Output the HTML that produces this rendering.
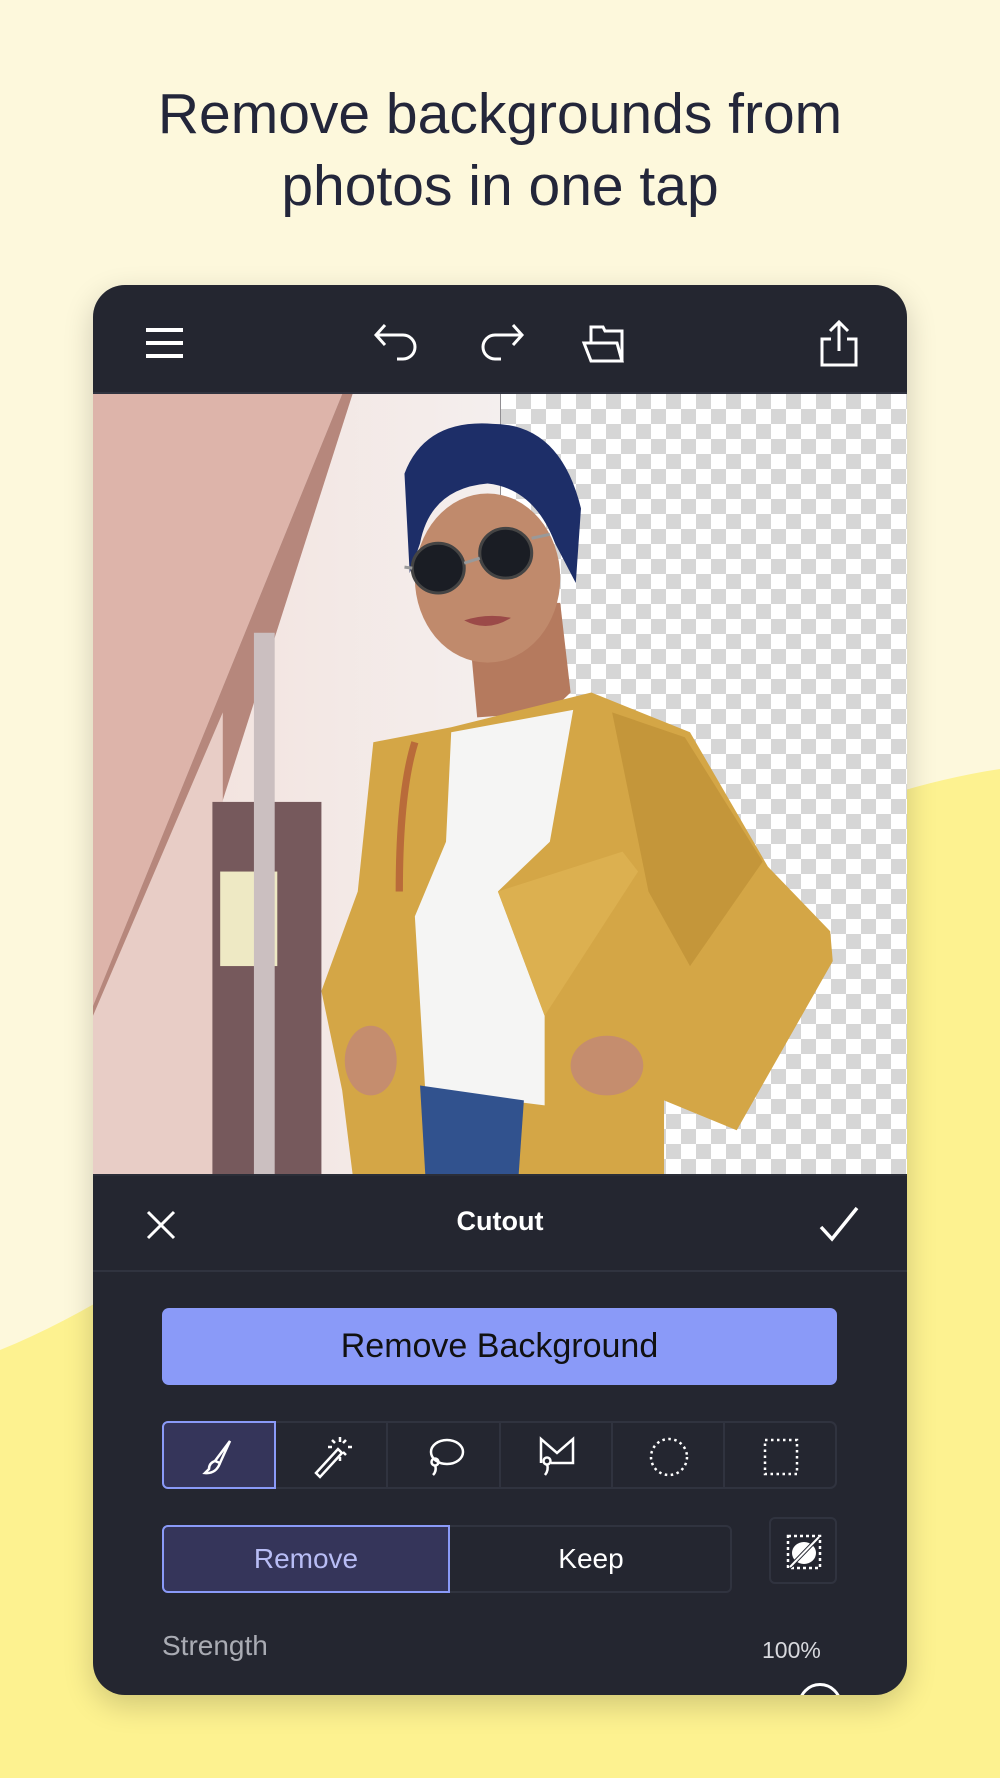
<!DOCTYPE html>
<html><head><meta charset="utf-8"><style>
*{margin:0;padding:0;box-sizing:border-box}
body{width:1000px;height:1778px;position:relative;overflow:hidden;background:#fdf8dc;font-family:"Liberation Sans",sans-serif}
.title{position:absolute;top:78px;left:0;width:1000px;text-align:center;font-size:57px;line-height:72px;color:#23263a}
.phone{position:absolute;left:93px;top:285px;width:814px;height:1410px;background:#242630;border-radius:32px;overflow:hidden;box-shadow:0 10px 30px rgba(0,0,0,.18)}
.ic{position:absolute}
.photo{position:absolute;left:0;top:109px;width:814px;height:780px;overflow:hidden}
.checker{position:absolute;left:408px;top:0;width:406px;height:780px;background-color:#fff;background-image:linear-gradient(45deg,#d6d6d6 25%,transparent 25%,transparent 75%,#d6d6d6 75%),linear-gradient(45deg,#d6d6d6 25%,transparent 25%,transparent 75%,#d6d6d6 75%);background-size:30px 30px;background-position:0 0,15px 15px}
.sep{position:absolute;left:0;width:814px;height:2px;background:#30333f}
.cut{position:absolute;top:921px;width:814px;text-align:center;color:#fff;font-weight:bold;font-size:27px}
.btn{position:absolute;left:69px;top:1023px;width:675px;height:77px;background:#8a9af8;border-radius:7px;color:#111;font-size:34px;text-align:center;line-height:77px}
.tools{position:absolute;left:69px;top:1136px;width:675px;height:68px;border:2px solid #30333f;border-radius:7px;display:flex}
.tools div{flex:1;border-right:2px solid #30333f;position:relative}
.tools div:last-child{border-right:none}
.tools .sel{background:#35355a;border:2px solid #8a9af8;border-radius:6px 0 0 6px;margin:-2px 0 -2px -2px}
.seg{position:absolute;top:1240px;left:69px;width:570px;height:68px;border:2px solid #30333f;border-radius:6px}
.seg .r{position:absolute;left:-2px;top:-2px;width:288px;height:68px;background:#35355a;border:2px solid #8a9af8;border-radius:6px 0 0 6px;color:#b8bdf5;font-size:28px;text-align:center;line-height:64px}
.seg .k{position:absolute;left:286px;top:0;width:282px;height:64px;color:#fff;font-size:28px;text-align:center;line-height:64px}
.sq{position:absolute;left:676px;top:1232px;width:68px;height:67px;border:2px solid #30333f;border-radius:6px}
svg{display:block}
</style></head><body>
<svg style="position:absolute;left:0;top:0" width="1000" height="1778"><path d="M0,1350 C300,1230 600,830 1000,769 L1000,1778 L0,1778Z" fill="#fdf290"/></svg>
<div class="title">Remove backgrounds from<br>photos in one tap</div>
<div class="phone">
 <svg class="ic" style="left:50px;top:40px" width="44" height="36" viewBox="0 0 44 36"><path d="M3,5H40M3,18H40M3,31H40" stroke="#fff" stroke-width="4"/></svg>
 <svg class="ic" style="left:280px;top:38px" width="50" height="40" viewBox="0 0 50 40" fill="none" stroke="#fff" stroke-width="3"><path d="M12,2L3,12L12,22M3,12H30A12,12 0 0 1 30,36H24"/></svg>
 <svg class="ic" style="left:382px;top:38px" width="50" height="40" viewBox="0 0 50 40" fill="none" stroke="#fff" stroke-width="3"><path d="M38,2L47,12L38,22M47,12H20A12,12 0 0 0 20,36H26"/></svg>
 <svg class="ic" style="left:488px;top:40px" width="48" height="40" viewBox="0 0 48 40" fill="none" stroke="#fff" stroke-width="3"><path d="M10,18V2H22L24,6H41V36M3,18H36L41,36H10Z"/></svg>
 <svg class="ic" style="left:724px;top:34px" width="44" height="50" viewBox="0 0 44 50" fill="none" stroke="#fff" stroke-width="3"><path d="M22,32V3M13,12L22,3L31,12M14,20H5V46H39V20H30"/></svg>
 <div class="sep" style="top:107px"></div>
 <div class="photo">
  <div class="checker"></div>
  <svg style="position:absolute;left:0;top:0" width="814" height="780" viewBox="0 0 1568 1568" preserveAspectRatio="none">
   <defs><linearGradient id="bg" x1="0" x2="1"><stop offset="0" stop-color="#f2dfd9"/><stop offset="1" stop-color="#f4efee"/></linearGradient></defs>
   <rect x="0" y="0" width="785" height="1568" fill="url(#bg)"/>
   <path d="M0,0H480L0,1230Z" fill="#ddb4aa"/>
   <path d="M0,1230L480,0H500L20,1568H0Z" fill="#b6877c"/>
   <path d="M0,1250L250,640V1568H0Z" fill="#e8cdc6"/>
   <rect x="230" y="820" width="210" height="748" fill="#76595c"/>
   <rect x="245" y="960" width="110" height="190" fill="#eee9c4"/>
   <rect x="310" y="480" width="40" height="1088" fill="#cbbfc0"/>
   <path d="M720,420L900,420L920,600L880,640L740,650Z" fill="#b57a5e"/>
   <ellipse cx="760" cy="370" rx="140" ry="170" fill="#c08a6c"/>
   <path d="M600,160Q640,50 770,60Q900,60 940,230L930,380L890,300Q850,190 760,180Q650,190 630,300L610,360Z" fill="#1d2e68"/>
   <circle cx="665" cy="350" r="50" fill="#1a1d24" stroke="#444" stroke-width="6"/>
   <circle cx="795" cy="320" r="50" fill="#1a1d24" stroke="#444" stroke-width="6"/>
   <path d="M715,340L745,330M845,290L880,282M615,350L600,348" stroke="#999" stroke-width="6"/>
   <path d="M715,455Q760,440 805,450Q760,480 715,455Z" fill="#9b4a48"/>
   <path d="M540,700L690,670L960,600L1150,680L1300,950L1420,1080L1425,1140L1240,1480L1100,1420L1100,1568L500,1568L480,1400L440,1200L510,1000Z" fill="#d4a646"/>
   <path d="M1000,640L1140,690L1290,940L1150,1150L1070,1000Z" fill="#c4963a"/>
   <path d="M690,680L925,635L880,900L780,1000L870,1250L870,1430L640,1400L620,1050L680,900Z" fill="#f5f5f4"/>
   <path d="M780,1000L1020,920L1050,960L870,1250Z" fill="#dcb050"/>
   <path d="M630,1390L830,1420L820,1568H640Z" fill="#31528e"/>
   <ellipse cx="535" cy="1340" rx="50" ry="70" fill="#c58d6e"/>
   <ellipse cx="990" cy="1350" rx="70" ry="60" fill="#c58d6e"/>
   <path d="M620,700Q590,800 590,1000" stroke="#b96b3a" stroke-width="14" fill="none"/>
  </svg>
 </div>
 <div class="sep" style="top:889px;background:#2b2e38"></div>
 <svg class="ic" style="left:52px;top:924px" width="32" height="32" viewBox="0 0 32 32"><path d="M3,3L29,29M29,3L3,29" stroke="#fff" stroke-width="3"/></svg>
 <div class="cut">Cutout</div>
 <svg class="ic" style="left:725px;top:920px" width="42" height="38" viewBox="0 0 42 38"><path d="M3,22L14,34L39,3" stroke="#fff" stroke-width="3.5" fill="none"/></svg>
 <div class="sep" style="top:985px"></div>
 <div class="btn">Remove Background</div>
 <div class="tools">
  <div class="sel"><svg class="ic" style="left:36px;top:14px" width="40" height="40" viewBox="0 0 40 40" fill="none" stroke="#fff" stroke-width="2.5"><path d="M30,4L20,26L15,24Z"/><path d="M15,24Q9,26 9,32L5,36Q16,37 20,26"/></svg></div>
  <div><svg class="ic" style="left:34px;top:12px" width="44" height="44" viewBox="0 0 44 44" fill="none" stroke="#fff" stroke-width="2.5"><path d="M6,38L28,14L32,18L10,42Z"/><path d="M30,2V7M30,22V26M38,12H42M18,12H22M22,5L25,8M36,5L33,8M36,20L33,17"/></svg></div>
  <div><svg class="ic" style="left:35px;top:12px" width="44" height="44" viewBox="0 0 44 44" fill="none" stroke="#fff" stroke-width="2.5"><ellipse cx="24" cy="17" rx="16" ry="12"/><circle cx="12" cy="27" r="3.5"/><path d="M12,30Q14,36 10,40"/></svg></div>
  <div><svg class="ic" style="left:34px;top:12px" width="44" height="44" viewBox="0 0 44 44" fill="none" stroke="#fff" stroke-width="2.5"><path d="M6,28V4L22,18L38,4V28H16"/><circle cx="12" cy="26" r="3.5"/><path d="M12,29Q14,35 10,40"/></svg></div>
  <div><svg class="ic" style="left:34px;top:12px" width="44" height="44" viewBox="0 0 44 44" fill="none" stroke="#fff" stroke-width="2.5" stroke-dasharray="2.5 3.5"><circle cx="22" cy="22" r="18"/></svg></div>
  <div><svg class="ic" style="left:34px;top:12px" width="44" height="44" viewBox="0 0 44 44" fill="none" stroke="#fff" stroke-width="2.5" stroke-dasharray="2.5 3.5"><rect x="6" y="5" width="32" height="34"/></svg></div>
 </div>
 <div class="seg"><div class="r">Remove</div><div class="k">Keep</div></div>
 <div class="sq"><svg class="ic" style="left:14px;top:14px" width="38" height="38" viewBox="0 0 38 38"><rect x="3" y="3" width="32" height="32" fill="none" stroke="#fff" stroke-width="2.5" stroke-dasharray="3 3"/><ellipse cx="19" cy="20" rx="12" ry="11" fill="#fff"/><path d="M5,34L34,4" stroke="#242630" stroke-width="4"/><path d="M5,34L34,4" stroke="#fff" stroke-width="2"/></svg></div>
 <div style="position:absolute;left:69px;top:1345px;color:#a9abb3;font-size:28px">Strength</div>
 <div style="position:absolute;left:669px;top:1352px;color:#d8d9de;font-size:23px">100%</div>
 <div style="position:absolute;left:705px;top:1398px;width:44px;height:44px;border:3px solid #fff;border-radius:50%"></div>
</div>
</body></html>
